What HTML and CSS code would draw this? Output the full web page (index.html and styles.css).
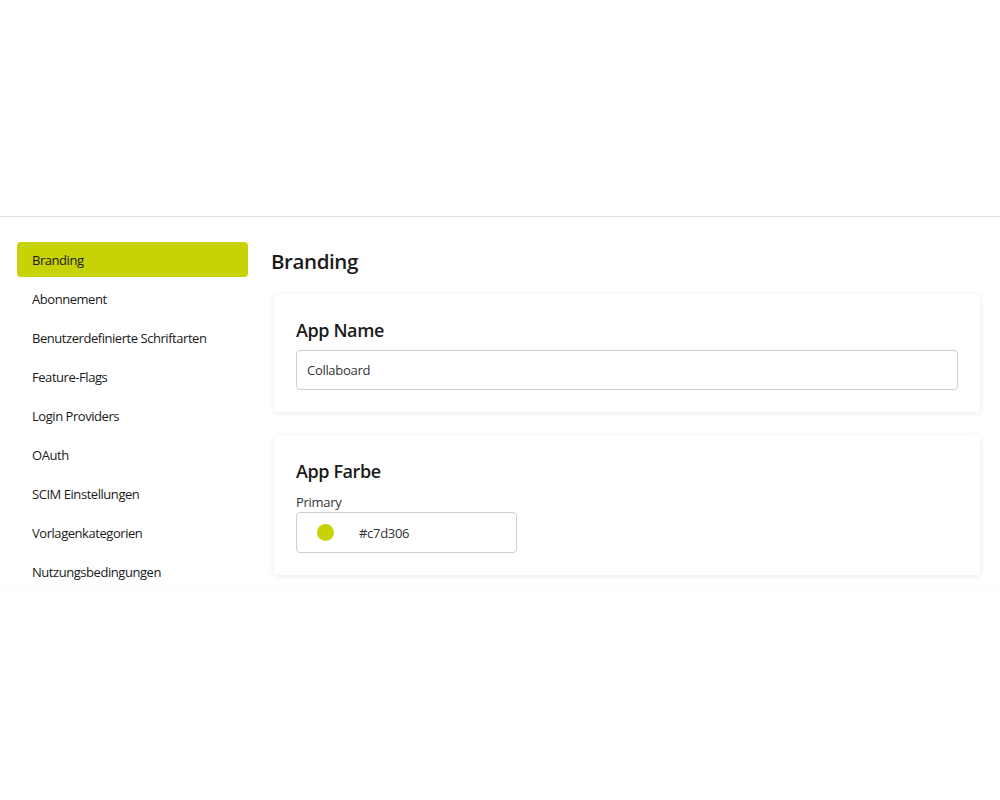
FILE: index.html
```html
<!DOCTYPE html>
<html lang="de">
<head>
  <meta charset="UTF-8">
  <meta name="viewport" content="width=device-width, initial-scale=1.0">
  <title>Branding</title>
  <link rel="stylesheet" href="styles.css">
</head>
<body>
  <!-- Top spacer -->
  <header class="topbar"></header>

  <div class="layout">
    <!-- Sidebar Navigation -->
    <nav class="sidebar">
      <a href="#" class="nav-item active">Branding</a>
      <a href="#" class="nav-item">Abonnement</a>
      <a href="#" class="nav-item">Benutzerdefinierte Schriftarten</a>
      <a href="#" class="nav-item">Feature-Flags</a>
      <a href="#" class="nav-item">Login Providers</a>
      <a href="#" class="nav-item">OAuth</a>
      <a href="#" class="nav-item">SCIM Einstellungen</a>
      <a href="#" class="nav-item">Vorlagenkategorien</a>
      <a href="#" class="nav-item">Nutzungsbedingungen</a>
    </nav>

    <!-- Main Content -->
    <main class="content">
      <h1 class="page-title">Branding</h1>

      <section class="card">
        <h2>App Name</h2>
        <input type="text" class="text-input" value="Collaboard" aria-label="App Name">
      </section>

      <section class="card card-color">
        <h2>App Farbe</h2>
        <label class="field-label">Primary</label>
        <div class="color-field">
          <span class="swatch"></span>
          <span class="color-value">#c7d306</span>
        </div>
      </section>
    </main>
  </div>
</body>
</html>
```

FILE: styles.css
```css
/* General Styles */
:root {
  --brand-color: #c7d306;
  --text-dark: #1a1a1a;
  --border-color: #cfcfcf;
  --shadow: 0 1px 6px rgba(0, 0, 0, 0.09);
}

body {
  font-family: "Open Sans", "Noto Sans", sans-serif;
  margin: 0;
  padding: 0;
  background: #ffffff;
  color: var(--text-dark);
}

.topbar {
  height: 216px;
  border-bottom: 1px solid #e2e2e2;
}

.layout {
  display: flex;
  height: 371px;
  background: #ffffff;
  border-bottom: 1px solid #fafafa;
}

/* Sidebar */
.sidebar {
  width: 231px;
  padding: 25px 0 0 17px;
  display: flex;
  flex-direction: column;
  gap: 4px;
}

.nav-item {
  display: block;
  height: 35px;
  line-height: 36px;
  padding-left: 15px;
  border-radius: 4px;
  color: var(--text-dark);
  text-decoration: none;
  font-size: 13px;
  letter-spacing: -0.45px;
}

.nav-item.active {
  background: var(--brand-color);
}

/* Main Content */
.content {
  flex: 1;
  padding: 0 20px 0 23px;
}

.page-title {
  margin: 29px 0 18px 0;
  font-size: 20.5px;
  font-weight: 600;
  letter-spacing: -0.4px;
  line-height: 30px;
}

.card {
  background: #ffffff;
  border-radius: 4px;
  box-shadow: var(--shadow);
  padding: 24px 22px 22px 22px;
  margin: 0 0 23px 3px;
}

.card h2 {
  margin: 0 0 8px;
  font-size: 18px;
  font-weight: 600;
  letter-spacing: -0.4px;
  line-height: 24px;
}

.card-color h2 {
  margin-bottom: 10px;
}

.text-input {
  display: block;
  box-sizing: border-box;
  width: 100%;
  height: 40px;
  padding: 0 10px;
  border: 1px solid var(--border-color);
  border-radius: 4px;
  font-family: inherit;
  font-size: 13px;
  color: #333;
  letter-spacing: -0.3px;
}

.field-label {
  display: block;
  font-size: 13px;
  line-height: 18px;
  margin-bottom: 1px;
  color: #333;
  letter-spacing: -0.3px;
}

.color-field {
  display: flex;
  align-items: center;
  box-sizing: border-box;
  width: 221px;
  height: 41px;
  border: 1px solid var(--border-color);
  border-radius: 4px;
  padding-left: 20px;
  background: #ffffff;
}

.swatch {
  width: 17px;
  height: 17px;
  border-radius: 50%;
  background: var(--brand-color);
}

.color-value {
  margin-left: 25px;
  font-size: 13px;
  color: #333;
  letter-spacing: -0.3px;
}
```
